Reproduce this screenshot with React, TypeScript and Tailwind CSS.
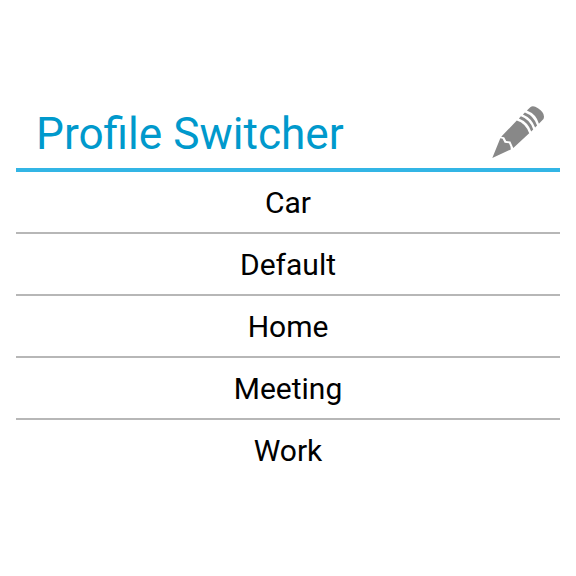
const profiles = ["Car", "Default", "Home", "Meeting", "Work"];

function Pencil() {
  return (
    <svg className="h-[54px] w-[54px]" viewBox="0 0 54 54" fill="#888">
      <path d="M1.3 53 L9.3 33.3 L11.6 33.8 L13.6 37.8 L18 38.2 L19.4 41.4 L19.8 44.4 Z" />
      <path d="M10.2 31.8 L25.8 15.4 Q34.5 18 38.2 28.2 L22.3 43 L21.2 40.5 L19.4 36.5 L15.2 36 L13.2 32.2 Z" />
      <path d="M27.9 13.4 L29.9 11.3 Q39 14.5 42.2 24.4 L40.2 26.4 Q37 17 27.9 13.4 Z" />
      <path d="M31.9 9.4 L33.9 7.4 Q43 10.8 46.1 20.6 L44.1 22.6 Q41 13.2 31.9 9.4 Z" />
      <path d="M35.9 5.6 L39.3 2.3 Q42 0 47 3.2 Q54.7 8.2 52.5 14 L47.9 18.8 Q45.3 9.2 35.9 5.6 Z" />
    </svg>
  );
}

export default function App() {
  return (
    <main className="h-[576px] w-[576px] bg-white px-4 pt-24 font-[Roboto,sans-serif]">
      <header className="flex h-[76px] items-center justify-between border-b-4 border-[#33b5e5] pr-[15px] pl-5">
        <h1 className="pt-1 text-[44.2px] leading-[52px] text-[#0099cc]">Profile Switcher</h1>
        <Pencil />
      </header>
      <ul>
        {profiles.map((name) => (
          <li
            key={name}
            className="flex h-[62px] items-center justify-center border-b-2 border-[#b7b7b7] text-[30px] text-black last:h-[60px] last:border-b-0"
          >
            {name}
          </li>
        ))}
      </ul>
    </main>
  );
}
